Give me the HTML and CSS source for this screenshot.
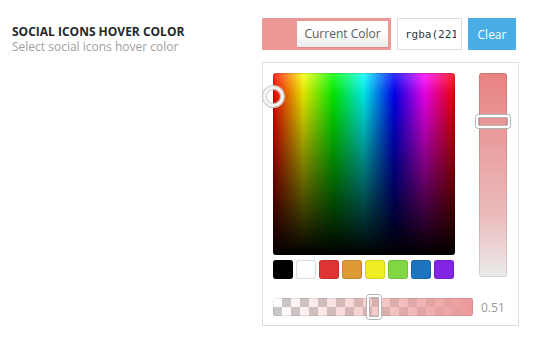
FILE: index.html
```html
<!DOCTYPE html>
<html>
<head>
  <meta charset="UTF-8">
  <title>Social icons hover color</title>
  <link rel="stylesheet" href="styles.css">
</head>
<body>
  <div class="field">
    <div class="field-label">
      <div class="field-title">SOCIAL ICONS HOVER COLOR</div>
      <div class="field-desc">Select social icons hover color</div>
    </div>

    <div class="field-control">
      <div class="picker-row">
        <button class="current-color">
          <span class="current-label">Current Color</span>
        </button>
        <input class="color-input" type="text" value="rgba(221,51,51,0.51)">
        <button class="clear-btn">Clear</button>
      </div>

      <!-- picker popup -->
      <div class="picker-panel">
        <div class="picker-main">
          <div class="spectrum">
            <span class="spectrum-handle"></span>
          </div>
          <div class="palette">
            <span class="swatch sw-black"></span>
            <span class="swatch sw-white"></span>
            <span class="swatch sw-red"></span>
            <span class="swatch sw-orange"></span>
            <span class="swatch sw-yellow"></span>
            <span class="swatch sw-green"></span>
            <span class="swatch sw-blue"></span>
            <span class="swatch sw-purple"></span>
          </div>
        </div>

        <div class="strip">
          <span class="strip-handle"></span>
        </div>

        <div class="alpha-row">
          <div class="alpha-bar">
            <span class="alpha-handle"></span>
          </div>
          <span class="alpha-value">0.51</span>
        </div>
      </div>
    </div>
  </div>
</body>
</html>
```

FILE: styles.css
```css
body {
  margin: 0;
  background-color: #ffffff;
  font-family: 'Open Sans', 'Noto Sans', sans-serif;
}

.field {
  display: flex;
  padding: 18px 12px;
}

.field-label {
  width: 250px;
  padding-top: 6px;
  flex-shrink: 0;
}

.field-title {
  font-size: 12px;
  line-height: 15px;
  font-weight: 700;
  color: #23282d;
}

.field-desc {
  font-size: 12px;
  line-height: 15px;
  color: #a0a0a0;
}

.picker-row {
  display: flex;
  align-items: center;
  height: 32px;
}

.current-color {
  display: flex;
  justify-content: flex-end;
  align-items: center;
  width: 129px;
  height: 32px;
  padding: 3px;
  margin: 0;
  border: none;
  border-radius: 0;
  background-color: rgba(221, 51, 51, 0.51);
  box-sizing: border-box;
  cursor: pointer;
}

.current-label {
  display: block;
  width: 91px;
  height: 26px;
  line-height: 26px;
  font-family: 'Open Sans', 'Noto Sans', sans-serif;
  font-size: 12px;
  color: #555d66;
  text-align: center;
  background: linear-gradient(#ffffff 40%, #ececec);
  box-shadow: 0 1px 0 rgba(0,0,0,0.08);
}

.color-input {
  width: 65px;
  height: 32px;
  margin: 0 0 0 6px;
  padding: 0 5px 0 7px;
  border: 1px solid #dddddd;
  box-sizing: border-box;
  font-family: 'DejaVu Sans Mono', monospace;
  font-size: 11px;
  color: #32373c;
  outline: none;
}

.clear-btn {
  width: 48px;
  height: 32px;
  margin: 0 0 0 6px;
  padding: 0;
  border: none;
  border-radius: 0;
  background-color: #4aaee6;
  color: #ffffff;
  font-family: 'Open Sans', 'Noto Sans', sans-serif;
  font-size: 12px;
  cursor: pointer;
}

.picker-panel {
  display: grid;
  grid-template-columns: 182px 28px;
  column-gap: 24px;
  width: 257px;
  margin-top: 12px;
  padding: 10px 11px 9px 10px;
  border: 1px solid #dddddd;
  box-sizing: border-box;
}

.spectrum {
  position: relative;
  height: 182px;
  border-radius: 3px;
  background:
    linear-gradient(to bottom, rgba(0,0,0,0) 0%, rgba(0,0,0,0.5) 50%, #000000 100%),
    linear-gradient(to bottom, rgba(255,255,255,0.18), rgba(255,255,255,0) 12%),
    linear-gradient(to right, #ff0000, #ffff00, #00ff00, #00ffff, #0000ff, #ff00ff, #ff0000);
  box-shadow: inset 0 0 2px rgba(0,0,0,0.45);
}

.spectrum-handle {
  position: absolute;
  left: -10px;
  top: 13px;
  width: 21px;
  height: 21px;
  border: 3px solid #f4f4f4;
  border-radius: 50%;
  box-sizing: border-box;
  box-shadow: 0 0 0 1px #c4c4c4, inset 0 0 0 1px #c4c4c4;
}

.palette {
  display: flex;
  gap: 3px;
  margin-top: 5px;
}

.swatch {
  width: 20px;
  height: 19px;
  border-radius: 3px;
  box-shadow: inset 0 0 0 1px rgba(0,0,0,0.1);
}

.sw-black { background-color: #000000; }
.sw-white { background-color: #ffffff; box-shadow: inset 0 0 0 1px #dddddd; }
.sw-red { background-color: #dd3333; }
.sw-orange { background-color: #dd9933; }
.sw-yellow { background-color: #eeee22; }
.sw-green { background-color: #81d742; }
.sw-blue { background-color: #1e73be; }
.sw-purple { background-color: #8224e3; }

.strip {
  position: relative;
  height: 204px;
  border-radius: 3px;
  background: linear-gradient(to bottom, #e88282, #ebbcbc 70%, #ececec);
  box-shadow: inset 0 0 0 1px rgba(0,0,0,0.1);
}

.strip-handle {
  position: absolute;
  left: -3px;
  top: 42px;
  width: 34px;
  height: 13px;
  border: 2px solid #ffffff;
  border-radius: 3px;
  box-sizing: border-box;
  box-shadow: 0 0 0 1px #b5b5b5, inset 0 0 0 1px #b5b5b5;
}

.alpha-row {
  grid-column: 1 / 3;
  display: flex;
  align-items: center;
  margin-top: 19px;
}

.alpha-bar {
  position: relative;
  width: 200px;
  height: 18px;
  border-radius: 2px;
  background:
    linear-gradient(to right, rgba(236,150,150,0) 0%, #ec9a9a 100%),
    repeating-conic-gradient(#c8c8c8 0% 25%, #ffffff 0% 50%) 0 0 / 18px 18px;
  box-shadow: inset 0 0 0 1px rgba(0,0,0,0.08);
}

.alpha-handle {
  position: absolute;
  left: 94px;
  top: -3px;
  width: 14px;
  height: 24px;
  border: 2px solid #ffffff;
  border-radius: 3px;
  box-sizing: border-box;
  box-shadow: 0 0 0 1px #b5b5b5, inset 0 0 0 1px #b5b5b5;
}

.alpha-value {
  margin-left: 8px;
  font-size: 12px;
  color: #999999;
}
```
